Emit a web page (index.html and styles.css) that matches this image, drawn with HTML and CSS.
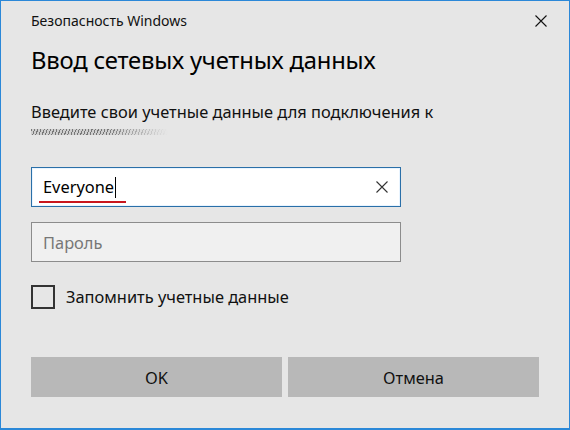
FILE: index.html
```html
<!DOCTYPE html>
<html lang="ru">
<head>
  <meta charset="UTF-8" />
  <title>Безопасность Windows</title>
  <link rel="stylesheet" href="styles.css">
</head>
<body>
  <div class="dialog">
    <div class="titlebar">
      <span class="title">Безопасность Windows</span>
      <span class="close">
        <svg width="12" height="12" viewBox="0 0 12 12"><path d="M0.5 0.5 L11.5 11.5 M11.5 0.5 L0.5 11.5" stroke="#111" stroke-width="1.1" fill="none"/></svg>
      </span>
    </div>

    <h1 class="heading">Ввод сетевых учетных данных</h1>

    <p class="desc">Введите свои учетные данные для подключения к</p>
    <div class="server-name"></div>

    <div class="field active">
      <span class="value">Everyone</span><span class="caret"></span>
      <span class="clear">
        <svg width="12" height="12" viewBox="0 0 12 12"><path d="M0.5 0.5 L11.5 11.5 M11.5 0.5 L0.5 11.5" stroke="#333" stroke-width="1.1" fill="none"/></svg>
      </span>
    </div>

    <div class="field disabled">
      <span class="placeholder">Пароль</span>
    </div>

    <label class="remember">
      <span class="box"></span>
      <span>Запомнить учетные данные</span>
    </label>

    <div class="buttons">
      <button class="btn">OK</button>
      <button class="btn">Отмена</button>
    </div>
  </div>
</body>
</html>
```

FILE: styles.css
```css
html, body {
  margin: 0;
  padding: 0;
  background: #e6e6e6;
  font-family: "Noto Sans", "Open Sans", sans-serif;
  color: #000;
}

.dialog {
  width: 570px;
  height: 430px;
  box-sizing: border-box;
  border: 1px solid #2b88d8;
  border-bottom-width: 2px;
  background: #e6e6e6;
  padding: 0 30px;
}

.titlebar {
  height: 39px;
  display: flex;
  align-items: center;
  justify-content: space-between;
}

.title {
  font-size: 14px;
  color: #111;
}

.close {
  display: flex;
  margin-right: -8px;
}

.heading {
  margin: 2px 0 0;
  font-size: 23.8px;
  font-weight: normal;
  line-height: 36px;
  letter-spacing: -0.2px;
}

.desc {
  margin: 23px 0 0;
  font-size: 16.4px;
  line-height: 22px;
  color: #111;
}

.server-name {
  width: 137px;
  height: 6px;
  margin: 6px 0 0;
  background: repeating-linear-gradient(110deg, #777 0 1px, #cfcfcf 1px 3px);
  filter: blur(0.6px);
  -webkit-mask-image: linear-gradient(90deg, #000 55%, transparent);
}

.field {
  width: 370px;
  height: 40px;
  box-sizing: border-box;
  display: flex;
  align-items: center;
  padding: 0 12px 0 11px;
  font-size: 16.4px;
}

.field.active {
  margin-top: 32px;
  background: #fff;
  border: 1px solid #2a6fa8;
  box-shadow: inset 0 0 0 1px #e8f4ff;
}

.field.disabled {
  margin-top: 15px;
  background: #f0f0f0;
  border: 1px solid #8c8c8c;
}

.value {
  position: relative;
  line-height: 20px;
}

/* red squiggle of the spell checker */
.value::after {
  content: '';
  position: absolute;
  left: -4px;
  right: -12px;
  bottom: -6px;
  height: 2px;
  background: #c8161d;
}

.caret {
  width: 1px;
  height: 21px;
  background: #000;
  margin-left: 1px;
}

.clear {
  display: flex;
  margin-left: auto;
}

.placeholder {
  color: #777;
}

.remember {
  display: flex;
  align-items: center;
  gap: 11px;
  margin-top: 23px;
  font-size: 16.4px;
  line-height: 24px;
  color: #111;
}

.box {
  width: 24px;
  height: 24px;
  box-sizing: border-box;
  border: 2px solid #333;
  background: #e6e6e6;
}

.buttons {
  display: flex;
  gap: 6px;
  margin-top: 48px;
}

.btn {
  flex: 1;
  height: 40px;
  border: none;
  background: #b8b8b8;
  font-family: inherit;
  font-size: 16.4px;
  color: #111;
  padding: 0;
}
```
